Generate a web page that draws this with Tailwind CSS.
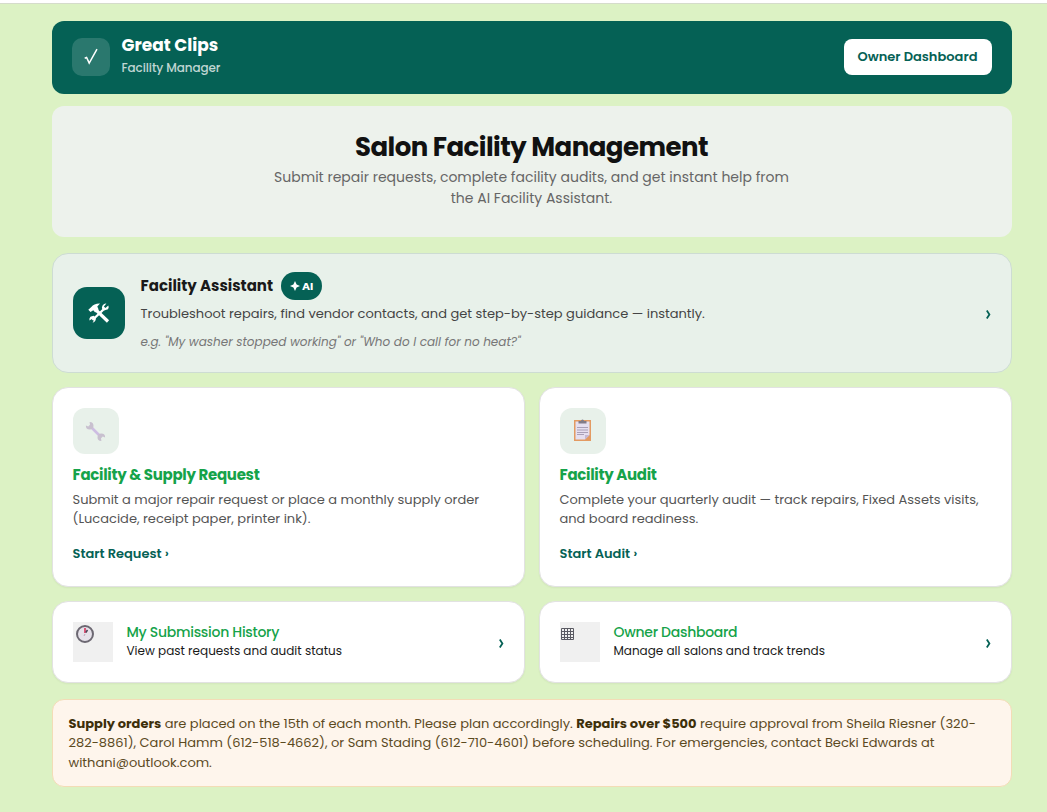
<!DOCTYPE html>
<html lang="en">
<head>
<meta charset="UTF-8" />
<meta name="viewport" content="width=device-width, initial-scale=1" />
<title>Salon Facility Management</title>
<script src="https://cdn.jsdelivr.net/npm/@tailwindcss/browser@4"></script>
</head>
<body class="h-[812px] overflow-hidden bg-[#dcf2c4] font-['Poppins','Inter',sans-serif] text-[#1a1a1a]">

<!-- Top strip -->
<div class="h-1 bg-white border-b border-[#d5dccb]"></div>

<main class="w-[960px] ml-[51.5px] pt-[17px] whitespace-nowrap">

  <!-- Header -->
  <header class="h-[73px] bg-[#056155] rounded-xl px-5 flex items-center">
    <div class="size-[38px] rounded-[10px] bg-white/15 flex items-center justify-center -mt-0.5">
      <svg class="w-[14px] h-[17px]" viewBox="0 0 14 17" fill="none" stroke="#fff" stroke-width="1.5"><path d="M.7 10.3l1.9-.8L5.2 15 13 1.2" /></svg>
    </div>
    <div class="ml-3 -mt-1">
      <div class="text-[17px] leading-6 font-bold text-white">Great Clips</div>
      <div class="text-xs leading-[22px] tracking-[-0.1px] font-medium text-white/75">Facility Manager</div>
    </div>
    <button class="ml-auto w-[148px] h-9 -mt-0.5 rounded-lg bg-white text-[13px] font-semibold text-[#056155]">Owner Dashboard</button>
  </header>

  <!-- Hero -->
  <section class="mt-3 h-[131px] rounded-xl bg-[#edf2ec] pt-[22px] text-center">
    <h1 class="text-[26px] leading-[38px] tracking-[-0.02em] font-bold text-[#111]">Salon Facility Management</h1>
    <p class="mt-px text-sm leading-[21px] text-[#666]">Submit repair requests, complete facility audits, and get instant help from<br />the AI Facility Assistant.</p>
  </section>

  <!-- Assistant -->
  <section class="mt-4 h-[120px] rounded-2xl bg-[#e8f1ea] border border-[#cddcd3] px-5 flex items-center">
    <div class="size-[52px] rounded-[14px] bg-[#056155] flex items-center justify-center">
      <svg class="size-[22px]" viewBox="0 0 22 22" fill="none" stroke="#fff">
        <path d="M4.5 18L16 7" stroke-width="2.4" />
        <path d="M20.3 3.6L17.4 6.1 15.9 4.6 18.4 1.6A4 4 0 0 0 14.2 7.1L16 8.5 20 7.3Q21.3 5.4 20.3 3.6z" fill="#fff" stroke="none" />
        <path d="M1.5 18.6L4.2 16.7 6 18.2 4.6 20.7A4 4 0 0 0 7.6 15.4L5.6 13.7 2.4 14.7Q.8 16.5 1.5 18.6z" fill="#fff" stroke="none" />
        <path d="M8 8l12 11.5" stroke-width="3.2" />
        <path d="M.3 7.7l3-2.7Q6 1.2 12 1.4L9.3 4.4l1.3 3L7.2 10.5 5.3 8.3 2.5 10z" fill="#fff" stroke="none" />
      </svg>
    </div>
    <div class="ml-4 pt-0.5">
      <div class="flex items-center h-7 gap-2">
        <span class="text-[15px] font-bold">Facility Assistant</span>
        <span class="w-[41px] h-7 rounded-full bg-[#056155] text-white text-[11px] font-bold flex items-center justify-center gap-[2px]">
          <svg class="size-[10px]" viewBox="0 0 10 10" fill="#fff"><path d="M5 0L6.6 3.4 10 5 6.6 6.6 5 10 3.4 6.6 0 5 3.4 3.4z" /></svg>AI
        </span>
      </div>
      <p class="text-[13px] leading-[27px] text-[#444]">Troubleshoot repairs, find vendor contacts, and get step-by-step guidance — instantly.</p>
      <p class="text-xs leading-[29px] italic text-[#777]">e.g. "My washer stopped working" or "Who do I call for no heat?"</p>
    </div>
    <svg class="ml-auto mt-0.5 w-[5px] h-[9px]" viewBox="0 0 5 9" fill="none" stroke="#056155" stroke-width="1.8"><path d="M.8.6L3.4 4.5.8 8.4" /></svg>
  </section>

  <div class="mt-[14px] grid grid-cols-2 gap-x-[14px] gap-y-[14px]">

    <!-- Facility & supply request -->
    <section class="h-[200px] rounded-2xl bg-white border border-[#e2e2e2] shadow-xs px-5 pt-5">
      <div class="size-[46px] rounded-xl bg-[#e8f1ea] flex items-center justify-center">
        <svg class="size-[21px]" viewBox="0 0 21 21">
          <path d="M5 5l11 11" stroke="#cdbde2" stroke-width="2.6" />
          <path d="M4.6.9A3.8 3.8 0 1 1 .9 4.5L3.2 5.6 5 3.8z" fill="#c8c0cf" />
          <path d="M16.4 20.1a3.8 3.8 0 1 1 3.7-3.6l-2.3-1.1L16 17.2z" fill="#c8c0cf" />
        </svg>
      </div>
      <h2 class="mt-2 text-[15px] leading-[26px] tracking-[-0.02em] font-bold text-[#16a34a]">Facility &amp; Supply Request</h2>
      <p class="mt-[1.75px] text-[13px] leading-[19.5px] text-[#555]">Submit a major repair request or place a monthly supply order<br />(Lucacide, receipt paper, printer ink).</p>
      <a class="block mt-[15.25px] text-[13px] leading-5 font-semibold text-[#056155]">Start Request ›</a>
    </section>

    <!-- Facility audit -->
    <section class="h-[200px] rounded-2xl bg-white border border-[#e2e2e2] shadow-xs px-5 pt-5">
      <div class="size-[46px] rounded-xl bg-[#e8f1ea] flex items-center justify-center">
        <svg class="w-[17px] h-[22px] -mt-0.5" viewBox="0 0 17 22">
          <path d="M0 1h17v21H0z" fill="#e39a62" />
          <path d="M1.5 2.5h14v13.500l-4.500 4.500H1.500z" fill="#e6dff0" />
          <path d="M11 20.500V16h4.500z" fill="#c5b8d4" />
          <path d="M4.500 4.500V2h2.500a1.500 1.500 0 0 1 3 0h2.500v2.500z" fill="#827c88" />
          <path d="M3 8.500h11M3 11h11M3 13.500h11M3 15.500h7" stroke="#aaa0b8" />
        </svg>
      </div>
      <h2 class="mt-2 text-[15px] leading-[26px] tracking-[-0.02em] font-bold text-[#16a34a]">Facility Audit</h2>
      <p class="mt-[1.75px] text-[13px] leading-[19.5px] text-[#555]">Complete your quarterly audit — track repairs, Fixed Assets visits,<br />and board readiness.</p>
      <a class="block mt-[15.25px] text-[13px] leading-5 font-semibold text-[#056155]">Start Audit ›</a>
    </section>

    <!-- Submission history -->
    <section class="h-[82px] rounded-2xl bg-white border border-[#e2e2e2] shadow-xs px-5 flex items-center">
      <div class="size-10 bg-[#f0f0f0] pl-[3px] pt-[3px]">
        <svg class="size-[18px]" viewBox="0 0 18 18">
          <circle cx="9" cy="9" r="8" fill="#e6e2ea" stroke="#6c6872" stroke-width="2" />
          <path d="M9 8V3" stroke="#d8325a" stroke-width="1.6" />
          <path d="M9.8 7.500l1.700-2.500" stroke="#4a4458" stroke-width="1.5" />
          <path d="M9 9l-1 2" stroke="#b9a5b9" />
        </svg>
      </div>
      <div class="ml-[14px] -mt-0.5">
        <div class="text-sm leading-5 tracking-[-0.02em] font-medium text-[#16a34a]">My Submission History</div>
        <div class="text-xs leading-[18px]">View past requests and audit status</div>
      </div>
      <svg class="ml-auto mt-0.5 w-[5px] h-[9px]" viewBox="0 0 5 9" fill="none" stroke="#056155" stroke-width="1.8"><path d="M.8.6L3.4 4.5.8 8.4" /></svg>
    </section>

    <!-- Owner dashboard -->
    <section class="h-[82px] rounded-2xl bg-white border border-[#e2e2e2] shadow-xs px-5 flex items-center">
      <div class="size-10 bg-[#f0f0f0] pl-[1.5px] pt-1.5">
        <svg class="w-[13px] h-[12px]" viewBox="0 0 13 12" fill="none" stroke="#5a5a63"><path d="M.5.5h12v11H.5zM3.500.5v11M6.500.5v11M9.500.5v11M.5 3.500h12M.5 6.500h12M.5 9.500h12" /></svg>
      </div>
      <div class="ml-[14px] -mt-0.5">
        <div class="text-sm leading-5 tracking-[-0.02em] font-medium text-[#16a34a]">Owner Dashboard</div>
        <div class="text-xs leading-[18px]">Manage all salons and track trends</div>
      </div>
      <svg class="ml-auto mt-0.5 w-[5px] h-[9px]" viewBox="0 0 5 9" fill="none" stroke="#056155" stroke-width="1.8"><path d="M.8.6L3.4 4.5.8 8.4" /></svg>
    </section>
  </div>

  <!-- Notice -->
  <section class="mt-4 h-[88px] rounded-xl bg-[#fef5ec] border border-[#f3dcb6] px-4 pt-[13.75px] text-[13px] leading-[19.5px] text-[#5c4a1f]">
    <b class="text-[#3d2f0a]">Supply orders</b> are placed on the 15th of each month. Please plan accordingly. <b class="text-[#3d2f0a]">Repairs over $500</b> require approval from Sheila Riesner (320-<br />
    282-8861), Carol Hamm (612-518-4662), or Sam Stading (612-710-4601) before scheduling. For emergencies, contact Becki Edwards at<br />
    withani@outlook.com.
  </section>
</main>

</body>
</html>
